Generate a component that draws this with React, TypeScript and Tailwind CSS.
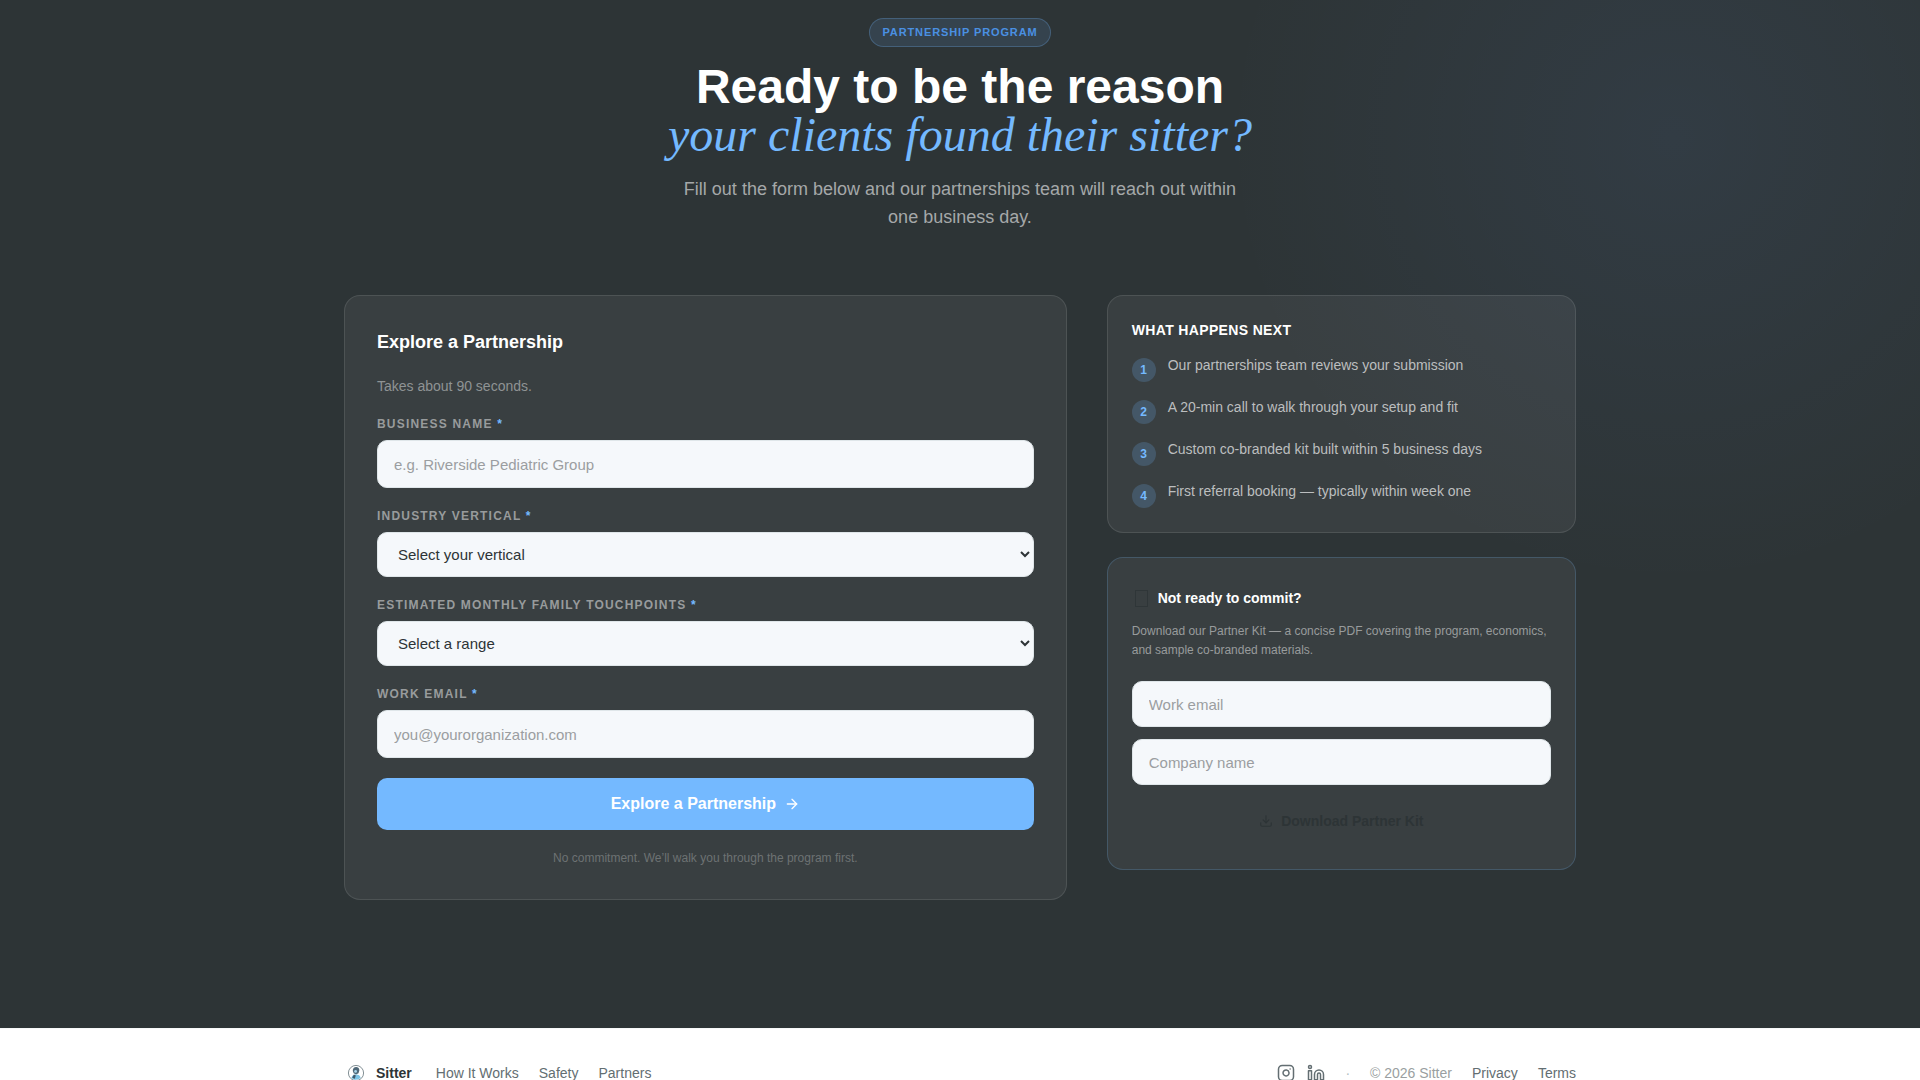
import React from "react";
import { ArrowRight, Download, Instagram, Linkedin } from "lucide-react";

const fieldBase =
  "block w-full rounded-[10px] border border-[#dfe6e9] bg-[#f5f8fb] text-[15px] text-[#2d3436] placeholder:text-[#9b9ea1] outline-none";

function Field({ id, label, children }: { id: string; label: string; children: React.ReactNode }) {
  return (
    <div>
      <label
        htmlFor={id}
        className="mb-2 block text-xs leading-4 font-bold tracking-widest text-[#989b9c] uppercase"
      >
        {label} <span className="text-[#74b9ff]">*</span>
      </label>
      {children}
    </div>
  );
}

const steps = [
  "Our partnerships team reviews your submission",
  "A 20-min call to walk through your setup and fit",
  "Custom co-branded kit built within 5 business days",
  "First referral booking — typically within week one",
];

function Logo() {
  return (
    <svg viewBox="0 0 24 24" className="size-6" aria-hidden="true">
      <circle cx="12" cy="12" r="7.6" fill="#fff" stroke="#76848a" strokeWidth="0.9" />
      <path d="M7.4 17c.4-2.4 1.8-3.6 4.4-3.6 2.8 0 4.500 1.200 4.900 3.400-2.400 2.500-6.700 2.600-9.300.2z" fill="#7cc4e6" />
      <path d="M8.800 10c-.2-2.600 1.400-4 3.300-4 2.100 0 3.500 1.400 3.200 3.800l-.8 2.400-2.500 1.200-2.300-1.200z" fill="#4f6878" />
      <circle cx="11.600" cy="10.400" r="1.400" fill="#a9d6ea" />
      <path d="M8.200 16.800l1.700-3.200 1.900 1-1 3.200z" fill="#41596a" />
    </svg>
  );
}

export default function App() {
  return (
    <div className="overflow-hidden bg-white font-['Liberation_Sans',Arial,sans-serif] text-[#2d3436]">
      <main className="relative overflow-hidden bg-[#2d3436] px-6 pt-[18px] pb-32">
        <div className="pointer-events-none absolute -top-[462px] -right-[353px] size-[1200px] rounded-full bg-[radial-gradient(circle_closest-side,rgba(116,165,255,0.07)_0%,transparent_75%)]" />
        <div className="relative mx-auto max-w-[1232px]">
          <header className="mx-auto mb-16 flex max-w-[600px] flex-col items-center text-center">
            <span className="rounded-full border border-[#74b9ff]/25 bg-[#74b9ff]/12 px-3 py-[5px] text-[11px] leading-[17px] font-bold tracking-[0.08em] text-[#4a90e2] uppercase">
              Partnership Program
            </span>
            <h1 className="mt-4 text-5xl leading-[48px] font-bold whitespace-nowrap text-white">
              Ready to be the reason
              <br />
              <em className="font-['Liberation_Serif',serif] font-normal text-[#74b9ff] italic">
                your clients found their sitter?
              </em>
            </h1>
            <p className="mt-4 max-w-[560px] text-lg leading-7 text-[#a5a8a9]">
              Fill out the form below and our partnerships team will reach out within one business day.
            </p>
          </header>

          <div className="grid grid-cols-1 items-start gap-10 lg:grid-cols-[1.54fr_1fr]">
            <form className="rounded-2xl border border-white/10 bg-white/6 p-8">
              <h2 className="text-lg leading-7 font-bold text-white">Explore a Partnership</h2>
              <p className="my-5 text-sm leading-5 text-[#8f9394]">Takes about 90 seconds.</p>
              <div className="flex flex-col gap-5">
                <Field id="business" label="Business Name">
                  <input id="business" type="text" placeholder="e.g. Riverside Pediatric Group" className={`${fieldBase} h-12 px-4`} />
                </Field>
                <Field id="vertical" label="Industry Vertical">
                  <select id="vertical" className={`${fieldBase} h-[45px] px-4`}>
                    <option>Select your vertical</option>
                  </select>
                </Field>
                <Field id="range" label="Estimated Monthly Family Touchpoints">
                  <select id="range" className={`${fieldBase} h-[45px] px-4`}>
                    <option>Select a range</option>
                  </select>
                </Field>
                <Field id="email" label="Work Email">
                  <input id="email" type="email" placeholder="you@yourorganization.com" className={`${fieldBase} h-12 px-4`} />
                </Field>
                <button
                  type="submit"
                  className="flex h-13 w-full items-center justify-center gap-2 rounded-[10px] bg-[#74b9ff] text-base font-bold text-white"
                >
                  Explore a Partnership
                  <ArrowRight size={16} strokeWidth={2} />
                </button>
              </div>
              <p className="mt-5 text-center text-xs leading-[17px] text-[#6d7273]">
                No commitment. We’ll walk you through the program first.
              </p>
            </form>

            <aside className="flex flex-col gap-6">
              <section className="rounded-2xl border border-white/10 bg-white/6 p-6">
                <h2 className="text-sm leading-5 font-bold tracking-wide text-white uppercase">What Happens Next</h2>
                <ol className="mt-3.5 flex flex-col gap-3.5">
                  {steps.map((step, i) => (
                    <li key={step} className="flex items-start gap-3 text-sm leading-[22px] text-[#bcbebf]">
                      <span className="mt-1 flex size-6 shrink-0 items-center justify-center rounded-full bg-[#74b9ff]/20 text-xs font-bold text-[#74b9ff]">
                        {i + 1}
                      </span>
                      {step}
                    </li>
                  ))}
                </ol>
              </section>

              <form className="rounded-2xl border border-[#74b9ff]/20 bg-white/6 px-6 pt-7 pb-6">
                <div className="flex items-center gap-2.5">
                  <span className="ml-[3px] h-[17px] w-[13px] border border-[#2f3638]" aria-hidden="true" />
                  <h2 className="text-sm leading-6 font-bold text-white">Not ready to commit?</h2>
                </div>
                <p className="mt-3 mb-[21px] text-xs leading-[19px] text-[#989b9c]">
                  Download our Partner Kit — a concise PDF covering the program, economics, and sample co-branded
                  materials.
                </p>
                <div className="flex flex-col gap-3">
                  <input type="email" aria-label="Work email" placeholder="Work email" className={`${fieldBase} h-[46px] px-4`} />
                  <input type="text" aria-label="Company name" placeholder="Company name" className={`${fieldBase} h-[46px] px-4`} />
                  <button
                    type="submit"
                    className="flex h-12 w-full items-center justify-center gap-2 rounded-[10px] text-sm font-bold text-[#2d3436]"
                  >
                    <Download size={14} strokeWidth={2} />
                    Download Partner Kit
                  </button>
                </div>
              </form>
            </aside>
          </div>
        </div>
      </main>

      <footer className="border-t border-[#f7f9fa] bg-white px-6 py-8">
        <div className="mx-auto flex max-w-[1232px] items-center justify-between text-sm leading-6 text-[#636e72]">
          <nav className="flex items-center gap-5">
            <a href="#" className="mr-1 flex items-center gap-2 font-bold text-[#2d3436]">
              <Logo />
              Sitter
            </a>
            <a href="#">How It Works</a>
            <a href="#">Safety</a>
            <a href="#">Partners</a>
          </nav>
          <div className="flex items-center gap-5">
            <div className="flex items-center gap-3">
              <a href="#" aria-label="Instagram">
                <Instagram size={18} />
              </a>
              <a href="#" aria-label="LinkedIn">
                <Linkedin size={18} />
              </a>
            </div>
            <span className="text-[#b2bec3]">·</span>
            <span className="text-[#9a9fa1]">© 2026 Sitter</span>
            <a href="#">Privacy</a>
            <a href="#">Terms</a>
          </div>
        </div>
      </footer>
    </div>
  );
}
